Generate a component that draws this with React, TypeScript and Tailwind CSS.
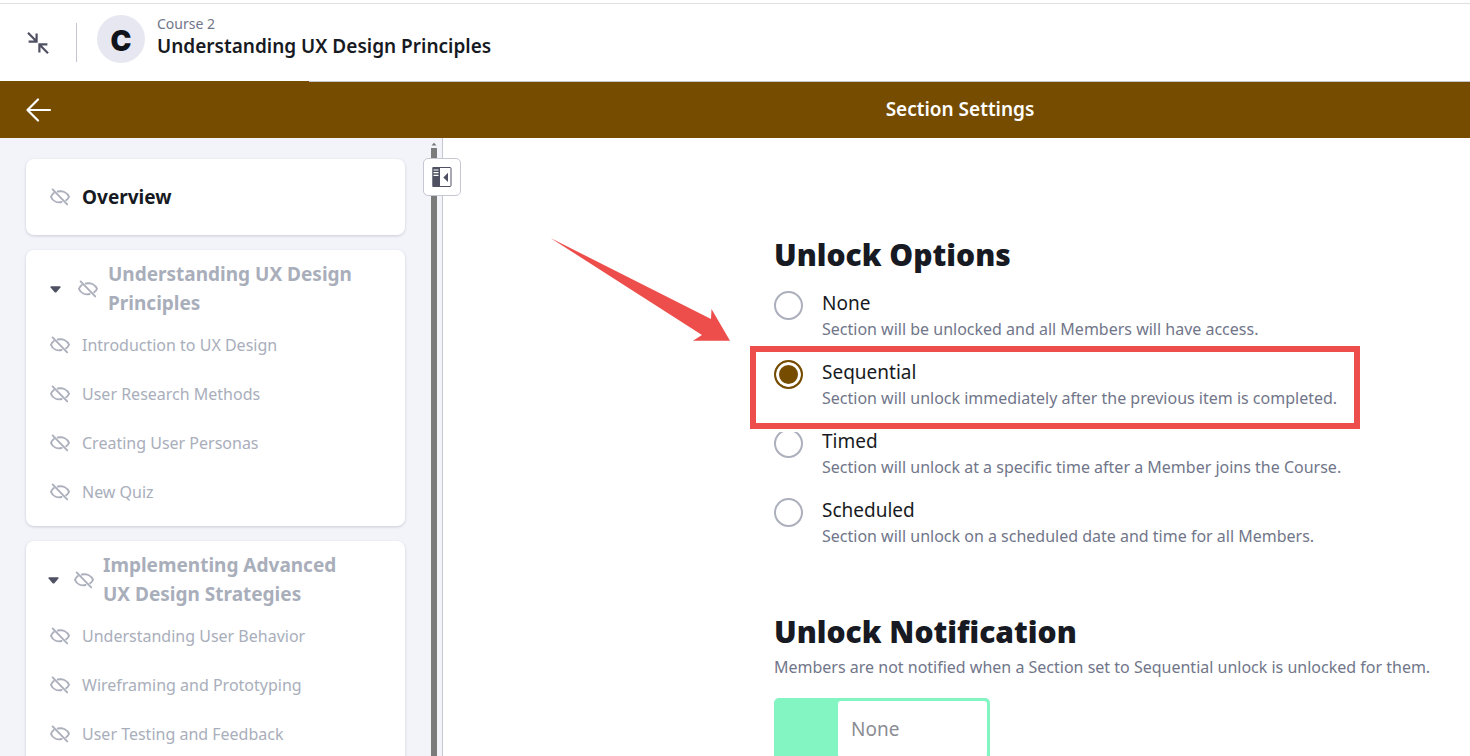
import { useState } from "react";

function EyeOff() {
  return (
    <svg
      viewBox="0 0 20 18"
      className="h-[18px] w-5 shrink-0"
      fill="none"
      stroke="#acafbc"
      strokeWidth="1.9"
      strokeLinecap="round"
      aria-hidden="true"
    >
      <path d="M2.6 1.4 L17.2 16.4" />
      <path d="M7.8 3.5 C13 2.5 17.4 4.8 19 8.8 C18.5 10.2 17.6 11.3 16.2 12.3" />
      <path d="M3.8 5 C2.4 6 1.5 7.3 1 8.8 C2.8 13.2 7.2 15 11.6 14" />
    </svg>
  );
}

function Caret() {
  return (
    <svg viewBox="0 0 11 7" className="h-[7px] w-[11px] shrink-0" fill="#4f5163" aria-hidden="true">
      <path d="M1 0.3 H10 Q11 0.5 10.4 1.5 L6.4 6.2 Q5.5 7 4.6 6.2 L0.6 1.5 Q0 0.5 1 0.3 Z" />
    </svg>
  );
}

const sections = [
  {
    title: "Understanding UX Design Principles",
    head: "pl-6 gap-[10px]",
    toggle: "gap-[17px]",
    lessons: ["Introduction to UX Design", "User Research Methods", "Creating User Personas", "New Quiz"],
  },
  {
    title: "Implementing Advanced UX Design Strategies",
    head: "pl-[22px] gap-[9px]",
    toggle: "gap-[15px]",
    lessons: [
      "Understanding User Behavior",
      "Wireframing and Prototyping",
      "User Testing and Feedback",
    ],
  },
];

const options = [
  { id: "none", label: "None", text: "Section will be unlocked and all Members will have access." },
  {
    id: "sequential",
    label: "Sequential",
    text: "Section will unlock immediately after the previous item is completed.",
    highlighted: true,
  },
  { id: "timed", label: "Timed", text: "Section will unlock at a specific time after a Member joins the Course." },
  { id: "scheduled", label: "Scheduled", text: "Section will unlock on a scheduled date and time for all Members." },
];

function Highlight() {
  return (
    <>
      <div className="pointer-events-none absolute -left-6 -top-[14px] z-10 h-[83px] w-[610px] border-[6px] border-[#ed4e4b] shadow-[0_3px_0_#fff]" />
      <svg
        viewBox="0 0 180 104"
        className="pointer-events-none absolute -left-[224px] -top-[122px] h-[104px] w-[180px]"
        fill="#ed4e4b"
        aria-hidden="true"
      >
        <path d="M0.5 0 L161 81 L161.5 71 L180 102.7 L143 102.7 L152 97 Z" />
      </svg>
    </>
  );
}

export default function App() {
  const [selected, setSelected] = useState("sequential");

  return (
    <div className="flex h-screen flex-col overflow-hidden bg-white font-['Noto_Sans',sans-serif] text-[#171a22]">
      <header className="mt-[3px] flex h-[79px] shrink-0 items-start border-t border-b border-t-[#dfe0e3] border-b-[#c3c4ce] pl-[26px]">
        <button type="button" aria-label="Exit full screen" className="mt-[27px] text-[#4f5163]">
          <svg viewBox="0 0 24 24" className="size-6" fill="none" stroke="currentColor" strokeWidth="2.2" aria-hidden="true">
            <path d="M2 1.8 L10.4 10.2 M10.6 2.6 V10.6 H2.6" />
            <path d="M22 22.2 L13.6 13.8 M13.4 21.4 V13.4 H21.4" />
          </svg>
        </button>
        <div className="ml-[26px] mt-[19px] h-[39px] w-px bg-[#c3c4d2]" />
        <div className="ml-5 mt-[11px] flex size-12 items-center justify-center rounded-full bg-[#e7e7f1] pt-[3px] font-['Inter',sans-serif] text-[28px] font-black text-[#11131b]">
          C
        </div>
        <div className="ml-3 mt-[10px]">
          <p className="text-sm leading-5 text-[#71768a]">Course 2</p>
          <h1 className="text-[19px] font-semibold leading-6">Understanding UX Design Principles</h1>
        </div>
      </header>

      <div className="relative flex h-14 shrink-0 items-center bg-[#754c00] pl-[26px] text-white">
        <div className="absolute -top-px left-0 h-px w-[309px] bg-[#754c00]" />
        <button type="button" aria-label="Back">
          <svg
            viewBox="0 0 26 24"
            className="h-6 w-[26px]"
            fill="none"
            stroke="currentColor"
            strokeWidth="2.2"
            strokeLinecap="round"
            strokeLinejoin="round"
            aria-hidden="true"
          >
            <path d="M24 12 H1.5 M12 1.5 L1.5 12 L12 22.5" />
          </svg>
        </button>
        <h2 className="ml-[398px] flex-1 pb-[2px] text-center text-[19px] font-semibold leading-6">Section Settings</h2>
      </div>

      <div className="flex min-h-0 flex-1">
        <aside className="relative flex w-[443px] shrink-0 border-r border-[#c6c7d3] bg-[#f3f4fa]">
          <nav className="ml-[26px] mt-[21px] flex w-[379px] flex-col gap-[15px]">
            <a
              href="#overview"
              className="flex h-[76px] shrink-0 items-center gap-3 rounded-lg bg-white pl-6 text-[19px] font-bold leading-6 shadow-[0_1px_3px_rgba(40,45,70,0.2)]"
            >
              <EyeOff />
              Overview
            </a>
            {sections.map((section) => (
              <section
                key={section.title}
                className="shrink-0 rounded-lg bg-white pb-[10px] pt-[10px] text-[#a9aebb] shadow-[0_1px_3px_rgba(40,45,70,0.2)]"
              >
                <div className={`flex items-center pr-[50px] ${section.head}`}>
                  <button
                    type="button"
                    aria-label={`Collapse ${section.title}`}
                    className={`flex shrink-0 items-center ${section.toggle}`}
                  >
                    <Caret />
                    <EyeOff />
                  </button>
                  <h3 className="text-[19px] font-bold leading-[29px]">{section.title}</h3>
                </div>
                <ul className="pt-[2px]">
                  {section.lessons.map((lesson) => (
                    <li key={lesson}>
                      <a href="#lesson" className="flex h-[49px] items-center gap-3 pl-6 text-base">
                        <EyeOff />
                        {lesson}
                      </a>
                    </li>
                  ))}
                </ul>
              </section>
            ))}
          </nav>
          <div className="ml-[26px] flex w-[6px] flex-col items-center pt-1">
            <svg viewBox="0 0 6 4" className="h-1 w-[6px] shrink-0" fill="#777" aria-hidden="true">
              <path d="M0.5 3.5 L3 0.8 L5.5 3.5 Z" />
            </svg>
            <div className="mt-[2px] w-[6px] flex-1 bg-[#7b7b7b]" />
          </div>
          <button
            type="button"
            aria-label="Hide sidebar"
            className="absolute left-[423px] top-5 z-10 flex size-[38px] items-center justify-center rounded-[5px] border border-[#c6c7d3] bg-white"
          >
            <svg viewBox="0 0 20 20" className="size-5" aria-hidden="true">
              <rect x="1" y="0.5" width="18" height="19" rx="1" fill="#fff" stroke="#4f5163" />
              <path d="M0.5 0 H8 V20 H0.5 Z" fill="#4f5163" />
              <path d="M1.5 3 H6.5 M1.5 5.7 H6.5 M1.5 8.4 H6.5" stroke="#fff" strokeWidth="1.2" />
              <path d="M16 5.8 V15 L11.3 10.4 Z" fill="#4f5163" />
            </svg>
          </button>
        </aside>

        <main className="min-w-0 flex-1 overflow-hidden pl-[331px]">
          <fieldset className="pt-24">
            <legend className="contents">
              <span className="block font-['Open_Sans',sans-serif] text-[30px] font-extrabold leading-[42px]">
                Unlock Options
              </span>
            </legend>
            <div className="mt-[15px] flex flex-col gap-[17px]">
              {options.map((option) => (
                <div key={option.id} className="relative flex h-[52px] gap-[19px]">
                  {option.highlighted && <Highlight />}
                  <input
                    id={option.id}
                    type="radio"
                    name="unlock"
                    checked={selected === option.id}
                    onChange={() => setSelected(option.id)}
                    className="size-[29px] shrink-0 appearance-none rounded-full border-2 border-[#acafbc] bg-white checked:border-[#754c00] checked:bg-[#754c00] checked:shadow-[inset_0_0_0_3px_#fff]"
                  />
                  <label htmlFor={option.id} className="-mt-px whitespace-nowrap">
                    <span className="block text-[19px] leading-[26px]">{option.label}</span>
                    <span className="block text-base leading-[26px] text-[#71768a]">{option.text}</span>
                  </label>
                </div>
              ))}
            </div>
          </fieldset>

          <section className="mt-[61px]">
            <h2 className="font-['Open_Sans',sans-serif] text-[30px] font-extrabold leading-[42px]">
              Unlock Notification
            </h2>
            <p className="mt-[1px] whitespace-nowrap text-base leading-[26px] text-[#71768a]">
              Members are not notified when a Section set to Sequential unlock is unlocked for them.
            </p>
            <div className="mt-[18px] w-[216px] rounded-[5px] bg-[#82f5c3] pb-[3px] pl-16 pr-[3px] pt-[3px]">
              <select
                aria-label="Unlock notification"
                className="h-[56px] w-full appearance-none rounded-[3px] bg-white px-[13px] text-[19px] text-[#8b8c93]"
              >
                <option>None</option>
              </select>
            </div>
          </section>
        </main>
      </div>
    </div>
  );
}
